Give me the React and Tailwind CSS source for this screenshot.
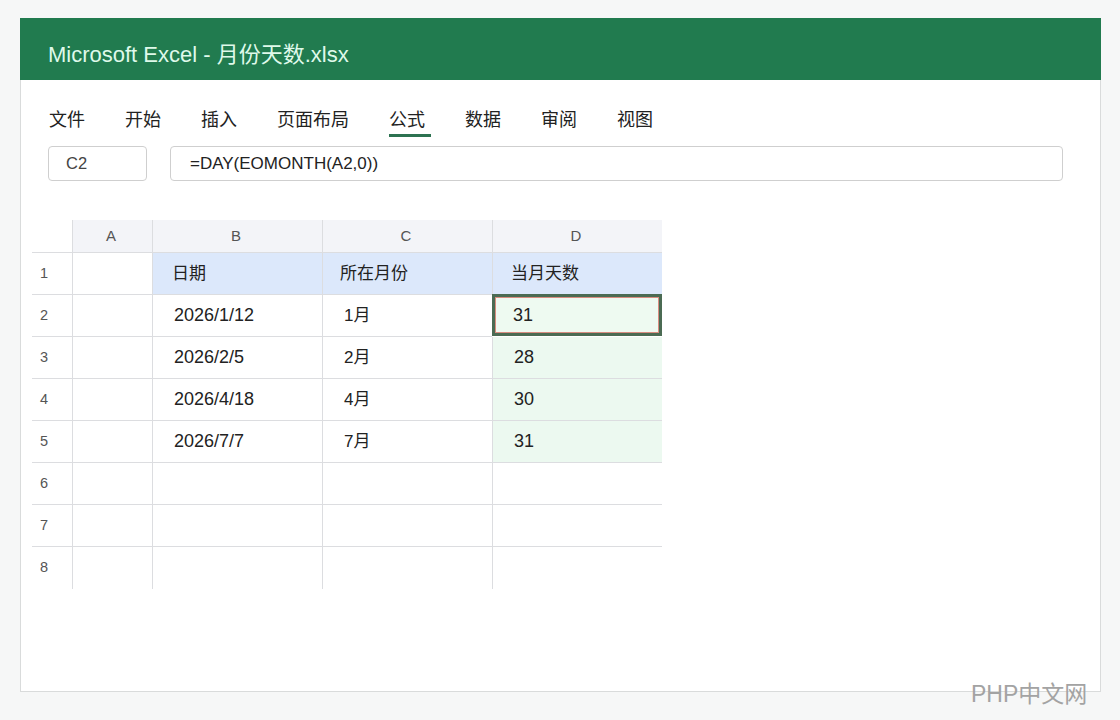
import React from "react";

const tabs = ["文件", "开始", "插入", "页面布局", "公式", "数据", "审阅", "视图"];
const cols = ["A", "B", "C", "D"];

const rows = [
  { n: 1, a: "", b: "日期", c: "所在月份", d: "当月天数", head: true },
  { n: 2, a: "", b: "2026/1/12", c: "1月", d: "31", sel: true },
  { n: 3, a: "", b: "2026/2/5", c: "2月", d: "28" },
  { n: 4, a: "", b: "2026/4/18", c: "4月", d: "30" },
  { n: 5, a: "", b: "2026/7/7", c: "7月", d: "31" },
  { n: 6 },
  { n: 7 },
  { n: 8 },
];

function App() {
  return (
    <div
      className="relative w-[1120px] h-[720px] overflow-hidden bg-[#f6f7f7] pt-[18px] pl-[20px]"
      style={{ fontFamily: '"Liberation Sans", "Noto Sans CJK SC", sans-serif' }}
    >
      <div className="w-[1081px] h-[674px] bg-white border border-[#d9dbdb] border-t-0">
        {/* title bar */}
        <div className="h-[62px] -ml-px -mr-px bg-[#217b4f] flex items-center pl-[28px] pt-[10px]">
          <span className="text-[22px] text-[#dff9ea]">Microsoft Excel - 月份天数.xlsx</span>
        </div>

        {/* ribbon tabs */}
        <div className="flex gap-[40px] pl-[28px] pt-[27px] h-[66px]">
          {tabs.map((t) => (
            <div key={t} className="relative">
              <span className="text-[18px] leading-[26px] text-[#222]">{t}</span>
              {t === "公式" && (
                <div className="absolute left-0 top-[27px] w-[42px] h-[3px] bg-[#2d7251]" />
              )}
            </div>
          ))}
        </div>

        {/* name box + formula bar */}
        <div className="flex gap-[23px] pl-[27px] pr-[37px]">
          <div className="w-[99px] h-[35px] border border-[#cfcfcf] rounded-[4px] flex items-center pl-[17px] text-[16.5px] text-[#444]">
            C2
          </div>
          <div className="flex-1 h-[35px] border border-[#cfcfcf] rounded-[4px] flex items-center pl-[19px] text-[17px] text-[#222]">
            =DAY(EOMONTH(A2,0))
          </div>
        </div>

        {/* sheet grid */}
        <div className="ml-[11px] mt-[39px] grid grid-cols-[40px_80px_170px_170px_170px] w-[630px]">
          <div className="h-[33px] border-b border-[#dcdde0]" />
          {cols.map((c) => (
            <div
              key={c}
              className="h-[33px] bg-[#f3f4f8] border-l border-b border-[#dcdde0] flex items-center justify-center pr-[3px] text-[15px] text-[#555]"
            >
              {c}
            </div>
          ))}
          {rows.map((r, i) => {
            const last = i === rows.length - 1;
            const line = last ? "" : "border-b";
            return (
              <React.Fragment key={r.n}>
                <div className={`h-[42px] ${line} border-[#dcdde0] flex items-center pl-[8px] text-[14.5px] text-[#555]`}>
                  {r.n}
                </div>
                <div className={`h-[42px] border-l ${line} border-[#dcdde0]`} />
                <div
                  className={`h-[42px] border-l ${line} border-[#dcdde0] flex items-center text-[#222] ${
                    r.head ? "bg-[#dce8fb] pl-[19px] text-[17px]" : "pl-[21px] text-[18px]"
                  }`}
                >
                  {r.b}
                </div>
                <div
                  className={`h-[42px] border-l ${line} border-[#dcdde0] flex items-center text-[#222] ${
                    r.head ? "bg-[#dce8fb] pl-[17px] text-[17px]" : "pl-[21px] text-[17px]"
                  }`}
                >
                  {r.c}
                </div>
                {r.sel ? (
                  <div className="h-[42px] -mt-px border-[3px] border-[#4b6b53] bg-[#eefaf1]">
                    <div className="h-full border border-[#d98c80] flex items-center pl-[17px] text-[18px] text-[#222]">
                      {r.d}
                    </div>
                  </div>
                ) : (
                  <div
                    className={`h-[42px] border-l ${line} border-[#dcdde0] flex items-center text-[#222] ${
                      r.head
                        ? "bg-[#dce8fb] pl-[18px] text-[17px]"
                        : r.d
                        ? "bg-[#ecf9f0] pl-[21px] text-[18px]"
                        : "pl-[21px] text-[18px]"
                    }`}
                  >
                    {r.d}
                  </div>
                )}
              </React.Fragment>
            );
          })}
        </div>
      </div>

      <div className="absolute left-[971px] top-[677px] text-[23px] text-[#a3a3a3]">PHP中文网</div>
    </div>
  );
}

export default App;
